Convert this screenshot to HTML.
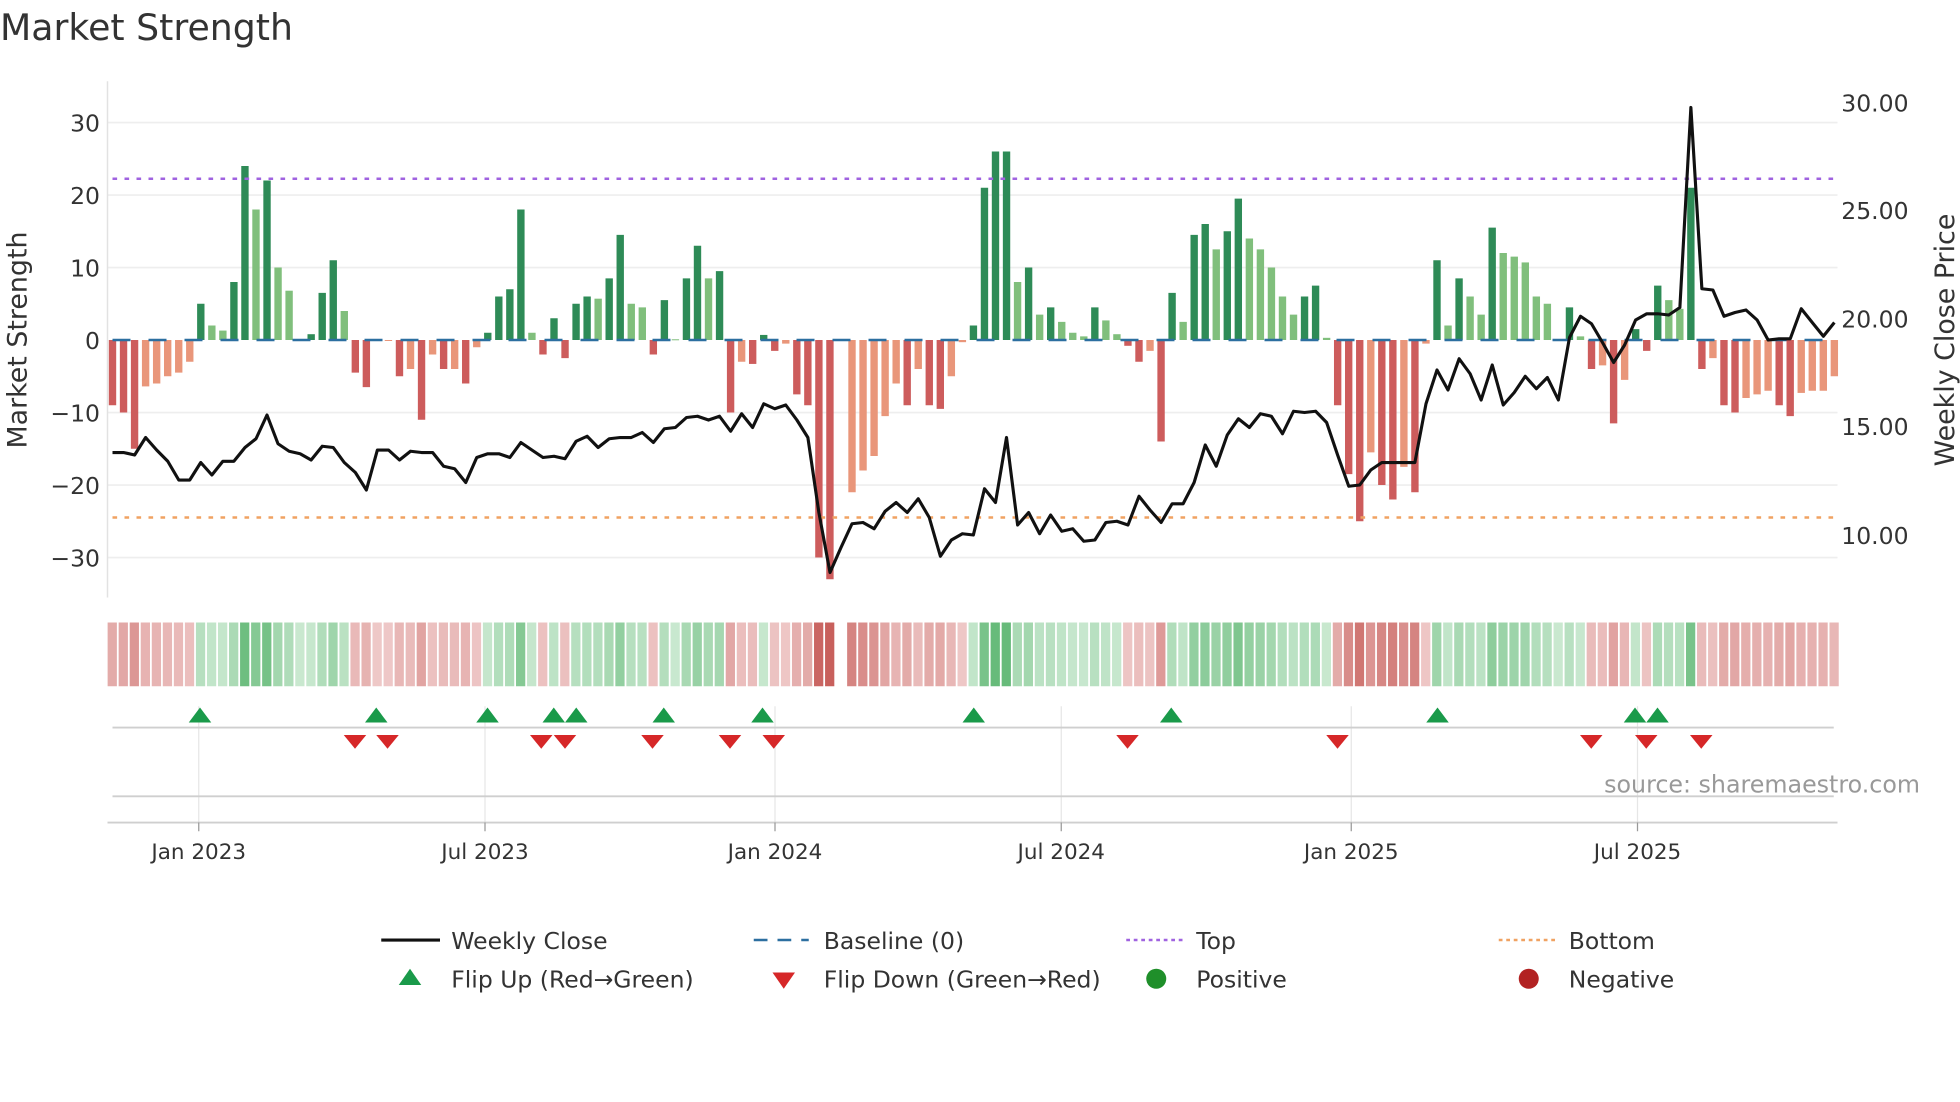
<!DOCTYPE html>
<html><head><meta charset="utf-8"><style>
html,body{margin:0;padding:0;background:#fff;}
svg{display:block;font-family:"DejaVu Sans","Liberation Sans",sans-serif;}
</style></head><body>
<svg id="s" width="1960" height="1102" viewBox="0 0 1568 881.6" xmlns="http://www.w3.org/2000/svg">
<rect width="1568" height="881.6" fill="#fff"/>
<text x="0" y="32" font-size="29" fill="#333">Market Strength</text>
<g stroke="#eeeeee" stroke-width="1.3">
<line x1="86" x2="1470" y1="98" y2="98"/><line x1="86" x2="1470" y1="156" y2="156"/><line x1="86" x2="1470" y1="214" y2="214"/><line x1="86" x2="1470" y1="330" y2="330"/><line x1="86" x2="1470" y1="388" y2="388"/><line x1="86" x2="1470" y1="446" y2="446"/>
</g>
<line x1="86" x2="86" y1="65" y2="478" stroke="#e2e2e2" stroke-width="1.2"/>
<g font-size="18.8" fill="#333" text-anchor="end">
<text x="80" y="105">30</text><text x="80" y="163">20</text><text x="80" y="221">10</text><text x="80" y="279">0</text><text x="80" y="337">−10</text><text x="80" y="395">−20</text><text x="80" y="453">−30</text>
</g>
<g font-size="18.8" fill="#333">
<text x="1473" y="89">30.00</text><text x="1473" y="175">25.00</text><text x="1473" y="262">20.00</text><text x="1473" y="348">15.00</text><text x="1473" y="435">10.00</text>
</g>
<text transform="translate(21,272) rotate(-90)" font-size="21.5" fill="#333" text-anchor="middle">Market Strength</text>
<text transform="translate(1563,272) rotate(-90)" font-size="21.5" fill="#333" text-anchor="middle">Weekly Close Price</text>
<g id="bars"></g>
<line x1="90" x2="1470" y1="272" y2="272" stroke="#2c6fa0" stroke-width="2" stroke-dasharray="14.4 14.4"/>
<line x1="90" x2="1470" y1="143" y2="143" stroke="#a063e0" stroke-width="2" stroke-dasharray="3.7 5.9"/>
<line x1="90" x2="1470" y1="414" y2="414" stroke="#f0a262" stroke-width="2" stroke-dasharray="3.7 5.9"/>
<polyline id="price" fill="none" stroke="#111" stroke-width="2.5" stroke-linejoin="round"/>
<g id="heat"></g>
<g stroke="#e6e6e6" stroke-width="1">
<line x1="159" x2="159" y1="565" y2="658"/><line x1="388" x2="388" y1="565" y2="658"/><line x1="620" x2="620" y1="565" y2="658"/><line x1="849" x2="849" y1="565" y2="658"/><line x1="1081" x2="1081" y1="565" y2="658"/><line x1="1310" x2="1310" y1="565" y2="658"/>
</g>
<line x1="90" x2="1467" y1="582" y2="582" stroke="#cfcfcf" stroke-width="1.5"/>
<line x1="90" x2="1467" y1="637" y2="637" stroke="#cfcfcf" stroke-width="1.5"/>
<line x1="86" x2="1470" y1="658" y2="658" stroke="#cfcfcf" stroke-width="1.5"/>
<g stroke="#999" stroke-width="1">
<line x1="159" x2="159" y1="658" y2="665"/><line x1="388" x2="388" y1="658" y2="665"/><line x1="620" x2="620" y1="658" y2="665"/><line x1="849" x2="849" y1="658" y2="665"/><line x1="1081" x2="1081" y1="658" y2="665"/><line x1="1310" x2="1310" y1="658" y2="665"/>
</g>
<g id="marks"></g>
<g font-size="17.2" fill="#333" text-anchor="middle">
<text x="159" y="687">Jan 2023</text><text x="388" y="687">Jul 2023</text><text x="620" y="687">Jan 2024</text><text x="849" y="687">Jul 2024</text><text x="1081" y="687">Jan 2025</text><text x="1310" y="687">Jul 2025</text>
</g>
<text x="1536" y="634" font-size="19" fill="#999" text-anchor="end">source: sharemaestro.com</text>
<g font-size="18.8" fill="#333">
<line x1="305" x2="352" y1="752" y2="752" stroke="#111" stroke-width="2.5"/>
<text x="361" y="759">Weekly Close</text>
<line x1="603" x2="647" y1="752" y2="752" stroke="#2c6fa0" stroke-width="2" stroke-dasharray="11 8"/>
<text x="659" y="759">Baseline (0)</text>
<line x1="901" x2="946" y1="752" y2="752" stroke="#a063e0" stroke-width="2" stroke-dasharray="3 3"/>
<text x="957" y="759">Top</text>
<line x1="1199" x2="1244" y1="752" y2="752" stroke="#f0a262" stroke-width="2" stroke-dasharray="3 3"/>
<text x="1255" y="759">Bottom</text>
<polygon points="319,788 337,788 328,775" fill="#1a9a4a"/>
<text x="361" y="790">Flip Up (Red→Green)</text>
<polygon points="618,778 636,778 627,791" fill="#d62728"/>
<text x="659" y="790">Flip Down (Green→Red)</text>
<circle cx="925" cy="783" r="8" fill="#1f8f2a"/>
<text x="957" y="790">Positive</text>
<circle cx="1223" cy="783" r="8" fill="#b22222"/>
<text x="1255" y="790">Negative</text>
</g>
</svg>
<script>
(function(){
var B="R-9 R-10 R-15 S-6.4 S-6 S-5 S-4.5 S-3 D5 L2 L1.3 D8 D24 L18 D22 L10 L6.8 Z0 D0.8 D6.5 D11 L4 R-4.5 R-6.5 Z0 S-0.1 R-5 S-4 R-11 S-2 R-4 S-4 R-6 S-1 D1 D6 D7 D18 L1 R-2 D3 R-2.5 D5 D6 L5.7 D8.5 D14.5 L5 L4.5 R-2 D5.5 L0.1 D8.5 D13 L8.5 D9.5 R-10 S-3 R-3.3 D0.7 R-1.5 S-0.5 R-7.5 R-9 R-30 R-33 Z0 S-21 S-18 S-16 S-10.5 S-6 R-9 S-4 R-9 R-9.5 S-5 S-0.3 D2 D21 D26 D26 L8 D10 L3.5 D4.5 L2.5 L1 L0.5 D4.5 L2.7 L0.8 R-0.8 R-3 S-1.5 R-14 D6.5 L2.5 D14.5 D16 L12.5 D15 D19.5 L14 L12.5 L10 L6 L3.5 D6 D7.5 L0.3 R-9 R-18.5 R-25 S-15.5 R-20 R-22 S-17.5 R-21 S-0.5 D11 L2 D8.5 L6 L3.5 D15.5 L12 L11.5 L10.7 L6 L5 Z0 D4.5 L0.5 R-4 S-3.5 R-11.5 S-5.5 D1.5 R-1.5 D7.5 L5.5 L4.3 D21 R-4 S-2.5 R-9 R-10 S-8 S-7.5 S-7 R-9 R-10.5 S-7.3 S-7 S-7 S-5".split(" ");
var P=[362,362,364,350,360,369,384,384,370,380,369,369,358,351,332,355,361,363,368,357,358,370,378,392,360,360,368,361,362,362,373,375,386,366,363,363,366,354,360,366,365,367,353,349,358,351,350,350,346,354,343,342,334,333,336,333,345,331,342,323,327,324,336,350,410,458,438,419,418,423,409,402,410,399,414,445,432,427,428,391,402,350,420,410,427,412,425,423,433,432,418,417,420,397,408,418,403,403,386,356,373,348,335,342,331,333,347,329,330,329,338,364,389,388,376,370,370,370,370,323,296,312,287,299,320,292,324,314,301,311,302,320,270,253,259,274,290,276,256,251,251,252,246,86,231,232,253,250,248,256,272,271,271,247,258,269,258];
var col={D:"#2e8b57",L:"#80bf7c",R:"#cd5c5c",S:"#e9967a"};
var NS="http://www.w3.org/2000/svg";
function el(t,a,p){var e=document.createElementNS(NS,t);for(var k in a)e.setAttribute(k,a[k]);p.appendChild(e);return e;}
var bars=document.getElementById("bars"),heat=document.getElementById("heat"),marks=document.getElementById("marks");
var step=8.83,x0=90,pts=[],prevSign=-1;
function mix(c1,c2,t){var r=[];for(var i=0;i<3;i++)r.push(Math.round(c1[i]+(c2[i]-c1[i])*t));return "rgb("+r.join(",")+")";}
for(var i=0;i<B.length;i++){
 var c=B[i][0],v=parseFloat(B[i].slice(1)),cx=x0+i*step;
 if(c!="Z"&&Math.abs(v)>0.05){
  var y0=272,y1=272-v*5.8;
  el("rect",{x:cx-2.95,y:Math.min(y0,y1),width:5.9,height:Math.max(0.8,Math.abs(y1-y0)),fill:col[c]},bars);
 }
 var sign=v>0.05?1:(v<-0.05?-1:prevSign);prevSign=sign;
 if(i!=66){
  var t=0.15+0.85*Math.min(1,Math.pow(Math.abs(v)/32,1.0));
  var f=sign>0?mix([222,242,226],[80,176,102],t):mix([245,218,218],[200,96,92],t);
  el("rect",{x:cx-3.9,y:498,width:7.4,height:51,fill:f},heat);
 }
 pts.push(cx.toFixed(1)+","+P[i]);
}
document.getElementById("price").setAttribute("points",pts.join(" "));
[160,301,390,443,461,531,610,779,937,1150,1308,1326].forEach(function(x){el("polygon",{points:(x-9)+",578 "+(x+9)+",578 "+x+",566",fill:"#1a9a4a"},marks);});
[284,310,433,452,522,584,619,902,1070,1273,1317,1361].forEach(function(x){el("polygon",{points:(x-9)+",588 "+(x+9)+",588 "+x+",599",fill:"#d62728"},marks);});
})();
</script>
</body></html>
